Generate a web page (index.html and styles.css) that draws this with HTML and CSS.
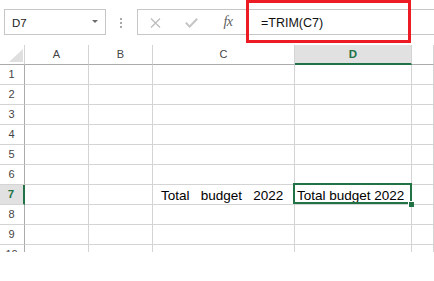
FILE: index.html
```html
<!DOCTYPE html>
<html>
<head>
<meta charset="utf-8">
<link rel="stylesheet" href="styles.css">
</head>
<body>
<div class="app">
  <div class="fbar">
    <div class="namebox"><span class="nb-text">D7</span><span class="nb-arrow"></span></div>
    <div class="grip"><i></i><i></i><i></i></div>
    <div class="fbox">
      <span class="fbtn b-x"><svg width="11" height="10" viewBox="0 0 11 10"><path d="M1 0.5 L10 9.5 M10 0.5 L1 9.5" stroke="#bdbdbd" stroke-width="1.3" fill="none"/></svg></span>
      <span class="fbtn b-ok"><svg width="13" height="10" viewBox="0 0 13 10"><path d="M0.8 4.6 L4.6 8.6 L12.2 0.8" stroke="#c4c4c4" stroke-width="2" fill="none"/></svg></span>
      <span class="fbtn b-fx">fx</span>
      <span class="finput">=TRIM(C7)</span>
    </div>
  </div>

  <div class="sheet">
    <div class="c corner"><svg width="14" height="13" viewBox="0 0 14 13"><path d="M0 13 L14 0 L14 13 Z" fill="#dfdfdf"/></svg></div>
    <div class="c hc">A</div>
    <div class="c hc">B</div>
    <div class="c hc">C</div>
    <div class="c hc hsel">D</div>
    <div class="c hc"></div>

    <div class="c rh">1</div><div class="c"></div><div class="c"></div><div class="c"></div><div class="c"></div><div class="c"></div>
    <div class="c rh">2</div><div class="c"></div><div class="c"></div><div class="c"></div><div class="c"></div><div class="c"></div>
    <div class="c rh">3</div><div class="c"></div><div class="c"></div><div class="c"></div><div class="c"></div><div class="c"></div>
    <div class="c rh">4</div><div class="c"></div><div class="c"></div><div class="c"></div><div class="c"></div><div class="c"></div>
    <div class="c rh">5</div><div class="c"></div><div class="c"></div><div class="c"></div><div class="c"></div><div class="c"></div>
    <div class="c rh">6</div><div class="c"></div><div class="c"></div><div class="c"></div><div class="c"></div><div class="c"></div>
    <div class="c rh rsel">7</div><div class="c"></div><div class="c"></div><div class="c txt txt-c">Total   budget   2022</div><div class="c txt txt-d">Total budget 2022<span class="sel"></span><span class="handle"></span></div><div class="c"></div>
    <div class="c rh">8</div><div class="c"></div><div class="c"></div><div class="c"></div><div class="c"></div><div class="c"></div>
    <div class="c rh">9</div><div class="c"></div><div class="c"></div><div class="c"></div><div class="c"></div><div class="c"></div>
    <div class="c rh">10</div><div class="c"></div><div class="c"></div><div class="c"></div><div class="c"></div><div class="c"></div>
  </div>

  <div class="callout"></div>
</div>
</body>
</html>
```

FILE: styles.css
```css
html, body {
  margin: 0;
  padding: 0;
  background: #ffffff;
}
.app {
  position: relative;
  width: 434px;
  height: 281px;
  overflow: hidden;
  font-family: "Liberation Sans", Arial, sans-serif;
  color: #000;
}

/* formula bar */
.fbar {
  display: flex;
  align-items: stretch;
  padding: 9px 0 0 4px;
  height: 26px;
}
.namebox {
  box-sizing: border-box;
  width: 102px;
  height: 26px;
  border: 1px solid #c6c6c6;
  display: flex;
  align-items: center;
  justify-content: space-between;
  padding: 0 7px 0 7px;
  font-size: 11.5px;
  color: #222;
}
.nb-text { padding-top: 1px; }
.nb-arrow {
  width: 0;
  height: 0;
  border-left: 3px solid transparent;
  border-right: 3px solid transparent;
  border-top: 3px solid #6d6d6d;
  margin-top: -1px;
}
.grip {
  margin-left: 14px;
  width: 2px;
  display: flex;
  flex-direction: column;
  justify-content: center;
  gap: 2px;
  padding-top: 1px;
}
.grip i {
  display: block;
  width: 2px;
  height: 2px;
  background: #a8a8a8;
}
.fbox {
  box-sizing: border-box;
  margin-left: 15px;
  flex: 1;
  margin-right: -20px;
  height: 26px;
  border: 1px solid #c6c6c6;
  border-right: none;
  display: flex;
  align-items: center;
}
.fbtn {
  display: flex;
  justify-content: center;
  align-items: center;
  height: 24px;
  padding-top: 2px;
  box-sizing: border-box;
}
.b-x { width: 34px; }
.b-ok { width: 38px; }
.b-fx {
  width: 36px;
  font-family: "Liberation Serif", "Times New Roman", serif;
  font-style: italic;
  font-size: 14px;
  color: #5f5f5f;
  padding-top: 0;
  letter-spacing: -0.5px;
}
.finput {
  padding-left: 15px;
  font-size: 12.5px;
  color: #111;
  padding-top: 2px;
}

/* sheet grid */
.sheet {
  margin-top: 10px;
  display: grid;
  grid-template-columns: 25px 64px 64px 142px 117px 1fr;
  grid-auto-rows: 20px;
  height: 207px;
  overflow: hidden;
}
.c {
  box-sizing: border-box;
  border-right: 1px solid #d4d4d4;
  border-bottom: 1px solid #d4d4d4;
}
.corner {
  border-bottom-color: #ababab;
  display: flex;
  align-items: flex-end;
  justify-content: flex-end;
  padding: 0 1px 2px 0;
}
.corner svg { display: block; }
.hc {
  border-bottom-color: #ababab;
  text-align: center;
  font-size: 11px;
  line-height: 19px;
  color: #444;
}
.hsel {
  background: #e1e1e1;
  border-bottom: 2px solid #217346;
  color: #217346;
  font-weight: bold;
  font-size: 11.5px;
}
.rh {
  border-right-color: #ababab;
  text-align: center;
  font-size: 11px;
  line-height: 19px;
  color: #444;
  padding-right: 1px;
}
.rsel {
  background: #e1e1e1;
  border-right: 2px solid #217346;
  color: #217346;
  font-weight: bold;
  font-size: 11.5px;
}
.txt {
  font-size: 13.5px;
  line-height: 19px;
  padding-top: 1px;
  white-space: pre;
  color: #000;
}
.txt-c { padding-left: 8px; }
.txt-d {
  padding-left: 2px;
  position: relative;
}
.sel {
  position: absolute;
  left: -2px;
  top: -2px;
  right: -1px;
  bottom: 0;
  border: 2px solid #217346;
  pointer-events: none;
}
.handle {
  position: absolute;
  left: 113px;
  top: 16px;
  width: 5px;
  height: 5px;
  background: #217346;
  border-left: 1px solid #fff;
  border-top: 1px solid #fff;
}

/* annotation box */
.callout {
  position: absolute;
  left: 246px;
  top: 0;
  width: 165px;
  height: 43px;
  box-sizing: border-box;
  border: 3px solid #ed1c24;
}
```
